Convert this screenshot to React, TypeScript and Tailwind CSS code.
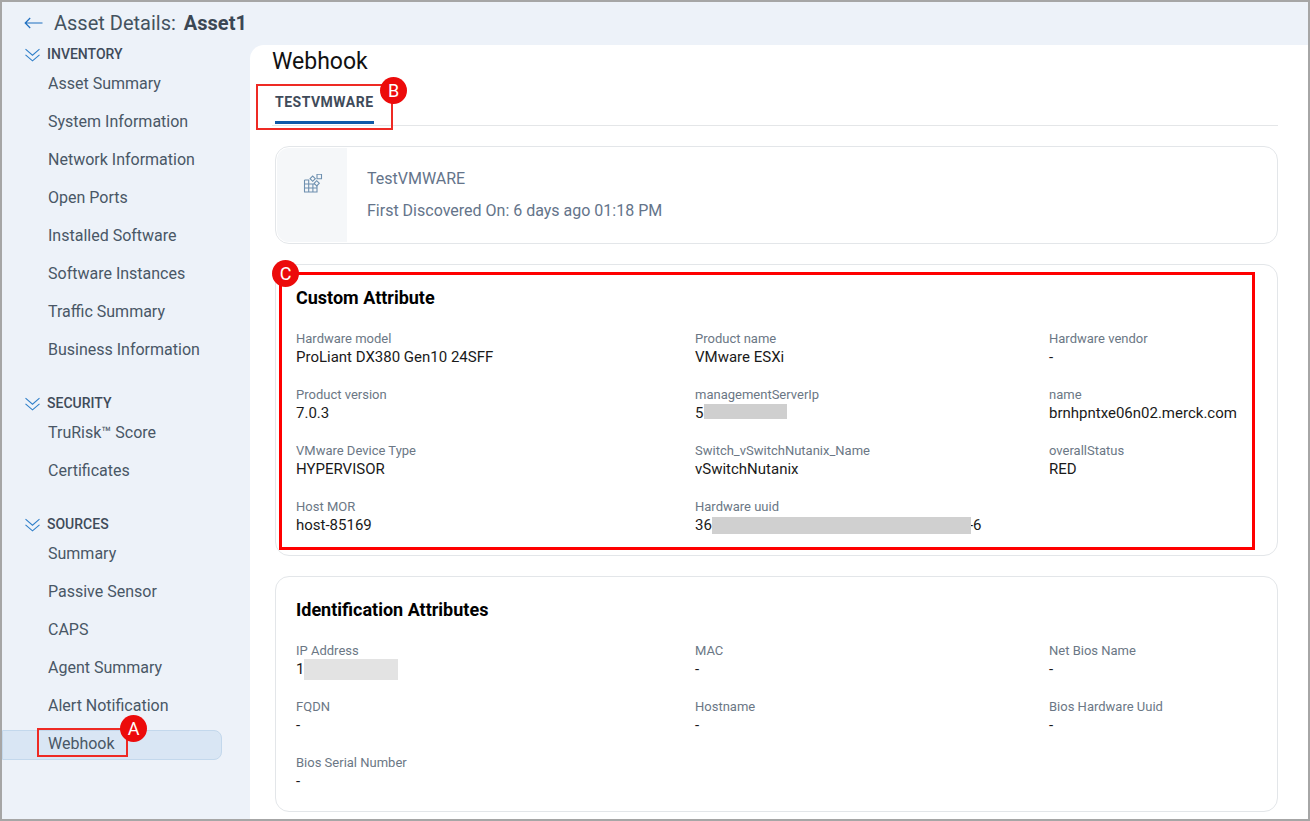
import React from 'react';

const roboto = 'font-["Roboto",sans-serif]';

type Group = { title: string; items: string[]; className: string };

const groups: Group[] = [
  {
    title: 'INVENTORY',
    className: 'mt-0',
    items: ['Asset Summary', 'System Information', 'Network Information', 'Open Ports', 'Installed Software', 'Software Instances', 'Traffic Summary', 'Business Information'],
  },
  { title: 'SECURITY', className: 'mt-[25px]', items: ['TruRisk™ Score', 'Certificates'] },
  { title: 'SOURCES', className: 'mt-[25px]', items: ['Summary', 'Passive Sensor', 'CAPS', 'Agent Summary', 'Alert Notification', 'Webhook'] },
];

type Attr = { label: string; value?: string; prefix?: string; hidden?: string; suffix?: string };

const customAttrs: Attr[] = [
  { label: 'Hardware model', value: 'ProLiant DX380 Gen10 24SFF' },
  { label: 'Product name', value: 'VMware ESXi' },
  { label: 'Hardware vendor', value: '-' },
  { label: 'Product version', value: '7.0.3' },
  { label: 'managementServerIp', prefix: '5', hidden: 'ml-[1px] -mt-[3px] h-[15px] w-[83px] bg-[#cfcfcf]' },
  { label: 'name', value: 'brnhpntxe06n02.merck.com' },
  { label: 'VMware Device Type', value: 'HYPERVISOR' },
  { label: 'Switch_vSwitchNutanix_Name', value: 'vSwitchNutanix' },
  { label: 'overallStatus', value: 'RED' },
  { label: 'Host MOR', value: 'host-85169' },
  { label: 'Hardware uuid', prefix: '36', hidden: 'relative z-10 -mr-[2px] h-[17px] w-[259px] bg-[#d0d0d0]', suffix: '-6' },
];

const identAttrs: Attr[] = [
  { label: 'IP Address', prefix: '1', hidden: 'h-[21px] w-[94px] bg-[#e3e3e3]' },
  { label: 'MAC', value: '-' },
  { label: 'Net Bios Name', value: '-' },
  { label: 'FQDN', value: '-' },
  { label: 'Hostname', value: '-' },
  { label: 'Bios Hardware Uuid', value: '-' },
  { label: 'Bios Serial Number', value: '-' },
];

function Badge({ letter, className }: { letter: string; className: string }) {
  return (
    <span className={`absolute flex h-[27px] w-[27px] items-center justify-center rounded-full bg-[#ec0b0b] text-[18px] font-normal leading-none text-white ${className}`}>
      {letter}
    </span>
  );
}

function AttrGrid({ attrs }: { attrs: Attr[] }) {
  return (
    <div className="mt-[20px] grid grid-cols-[399px_354px_1fr] gap-y-[20px]">
      {attrs.map((a) => (
        <div key={a.label} className="h-[36px]">
          <div className="h-[18px] text-[13px] leading-[18px] text-[#6b7785]">{a.label}</div>
          <div className="flex h-[18px] items-center text-[15px] leading-[18px] text-[#1a1a1a]">
            {a.value}
            {a.prefix}
            {a.hidden ? <span className={a.hidden} /> : null}
            {a.suffix}
          </div>
        </div>
      ))}
    </div>
  );
}

export default function App() {
  return (
    <div className={`${roboto} relative flex h-[821px] w-[1310px] flex-col overflow-hidden border-2 border-[#a6a6a6] bg-[#edf2f9]`}>
      <header className="flex h-[42px] shrink-0 items-center pl-[22px] text-[#44525f]">
        <svg width="19" height="12" viewBox="0 0 19 12" fill="none" stroke="#1f6fc0" strokeWidth="1.2">
          <path d="M18.5 6H1.2M6.2 1L1.2 6l5 5" />
        </svg>
        <span className="ml-[11px] text-[20px] leading-none">Asset Details:</span>
        <span className="ml-[8px] text-[20px] font-bold leading-none text-[#3b4754]">Asset1</span>
      </header>

      <div className="flex min-h-0 flex-1">
        <aside className="relative w-[248px] shrink-0 pt-px">
          {groups.map((g) => (
            <div key={g.title} className={g.className}>
              <div className="flex h-[20px] items-center pl-[23px]">
                <svg width="15" height="14" viewBox="0 0 15 14" fill="none" stroke="#2f7fc9" strokeWidth="1.1">
                  <path d="M.5 1.2l7 6 7-6M.5 6.8l7 6 7-6" />
                </svg>
                <span className="mb-[2px] ml-[7px] text-[14px] font-medium text-[#3f4b5a]">{g.title}</span>
              </div>
              {g.items.map((item) => (
                <div
                  key={item}
                  className={
                    item === 'Webhook'
                      ? 'mt-[5px] flex h-[30px] w-[220px] items-center rounded-r-[8px] border border-[#c3d8ec] bg-[#d9e6f4] pb-[3px] pl-[45px] text-[16px] text-[#495766]'
                      : 'flex h-[38px] items-center pl-[46px] text-[16px] text-[#495766]'
                  }
                >
                  {item}
                </div>
              ))}
            </div>
          ))}
          <div className="absolute left-[35px] top-[684px] h-[29px] w-[91px] border-2 border-[#ee2a24]" />
          <Badge letter="A" className="left-[118px] top-[671px]" />
        </aside>

        <main className="relative mt-px min-w-0 flex-1 overflow-hidden rounded-tl-[14px] bg-white pl-[22px]">
          <h1 className="mt-[2px] text-[23px] font-normal leading-[30px] text-[#111]">Webhook</h1>
          <div className="mr-[30px] mt-[3px] flex h-[46px] items-start border-b border-[#e4e6e8] pl-[3px]">
            <div className="h-[44px] border-b-[3px] border-[#0f5aa8] pt-[12px] text-[14px] font-bold leading-[20px] tracking-[0.5px] text-[#3f4b5a]">
              TESTVMWARE
            </div>
          </div>
          <div className="absolute left-[6px] top-[39px] h-[46px] w-[137px] border-2 border-[#ee2a24]" />
          <Badge letter="B" className="left-[130px] top-[32px]" />

          <section className="mr-[30px] ml-[3px] mt-[20px] flex h-[98px] overflow-hidden rounded-[14px] border border-[#e3e6e9] p-px">
            <div className="flex w-[70px] items-start rounded-l-[12px] bg-[#f5f7f9] pl-[26px] pt-[26px]">
              <svg width="20" height="20" viewBox="0 0 20 20" fill="#f5f7f9" stroke="#6e90b0" strokeWidth="1.1">
                <path fill="none" d="M1.5 6h4.2v12M1.5 6v12H14v-8M1.5 10H14M1.5 14H14M9.9 10v8" />
                <path d="M7.1 4.7l2.6-2.6 2.6 2.6-2.6 2.6zM11.1 9.3l2.6-2.6 2.6 2.6-2.6 2.6z" />
                <path d="M14 .3h4.5v4.5H14z" />
              </svg>
            </div>
            <div className="pl-[20px] pt-[21px] text-[16px] text-[#64748a]">
              <div className="h-[20px] leading-[20px]">TestVMWARE</div>
              <div className="mt-[12px] h-[20px] leading-[20px]">First Discovered On: 6 days ago 01:18 PM</div>
            </div>
          </section>

          <section className="relative mr-[30px] ml-[3px] mt-[20px] h-[292px] rounded-[14px] border border-[#e3e6e9] px-[20px] pt-[21px]">
            <h2 className="text-[18px] font-bold leading-[24px] text-black">Custom Attribute</h2>
            <AttrGrid attrs={customAttrs} />
          </section>
          <div className="absolute left-[29px] top-[227px] h-[278px] w-[976px] border-[3px] border-[#ff0000]" />
          <Badge letter="C" className="left-[22px] top-[215px]" />

          <section className="mr-[30px] ml-[3px] mt-[20px] h-[236px] rounded-[14px] border border-[#e3e6e9] px-[20px] pt-[21px]">
            <h2 className="text-[18px] font-bold leading-[24px] text-black">Identification Attributes</h2>
            <AttrGrid attrs={identAttrs} />
          </section>
        </main>
      </div>
    </div>
  );
}
